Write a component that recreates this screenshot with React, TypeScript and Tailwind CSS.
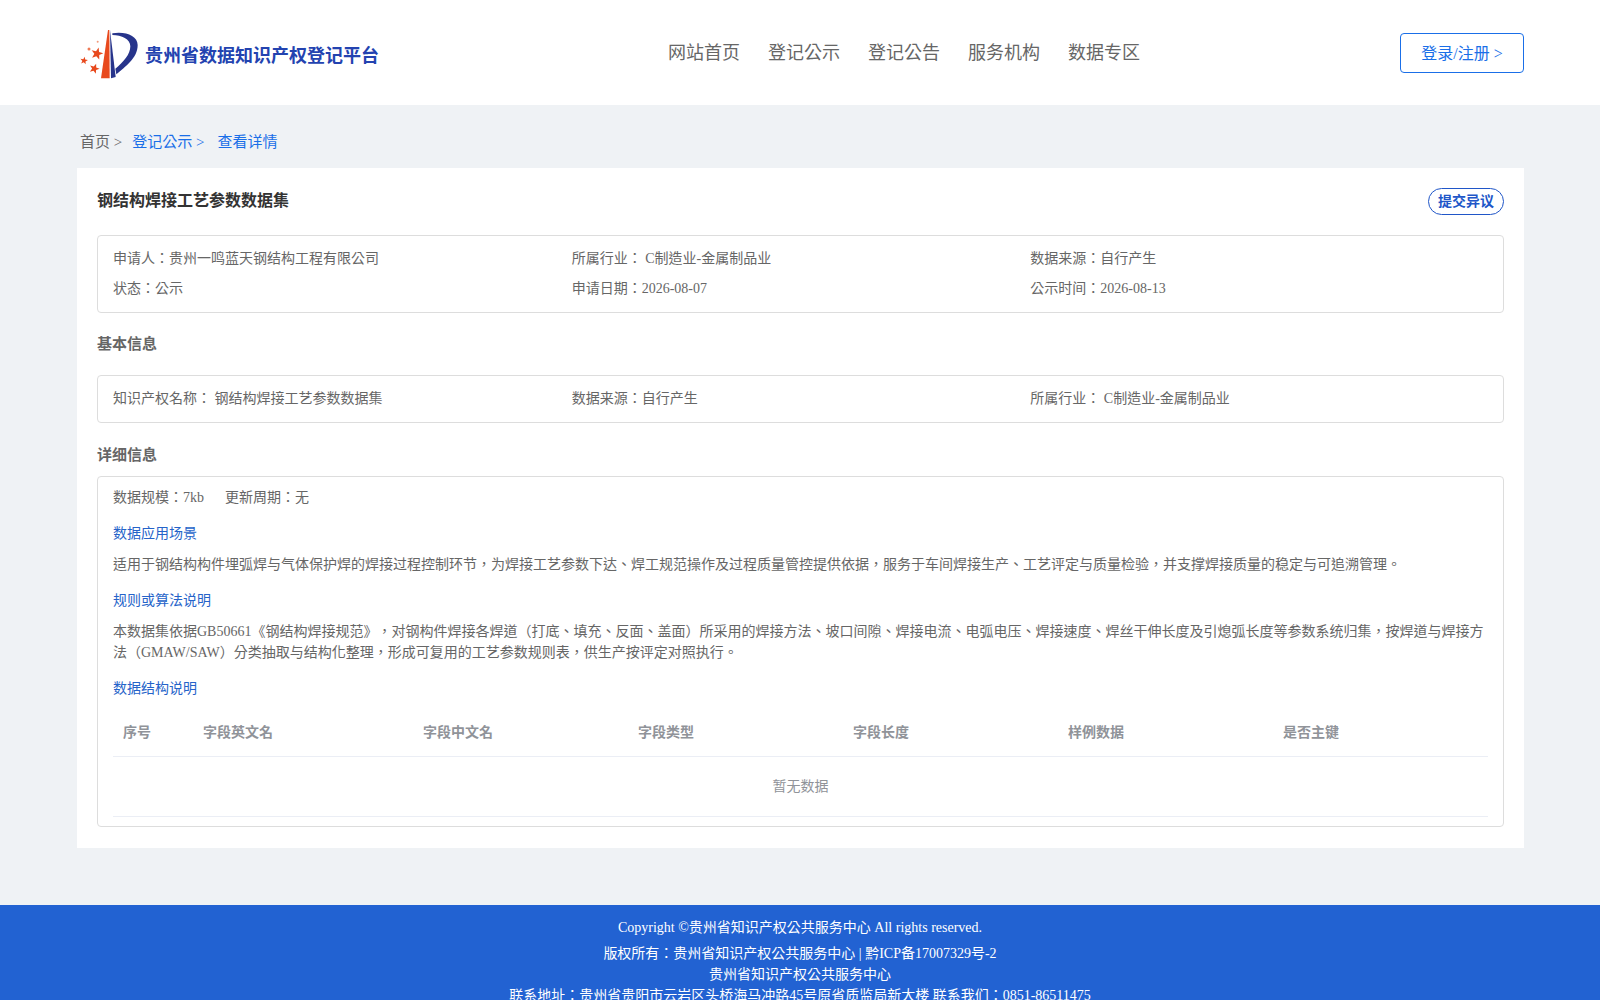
const navItems = ['网站首页', '登记公示', '登记公告', '服务机构', '数据专区']
const columns = ['序号', '字段英文名', '字段中文名', '字段类型', '字段长度', '样例数据', '是否主键']

function starPoints(cx: number, cy: number, r: number, rot = -90) {
  const pts: string[] = []
  for (let i = 0; i < 10; i++) {
    const rad = i % 2 === 0 ? r : r * 0.42
    const a = ((rot + i * 36) * Math.PI) / 180
    pts.push(`${cx + rad * Math.cos(a)},${cy + rad * Math.sin(a)}`)
  }
  return pts.join(' ')
}

function Logo() {
  return (
    <svg viewBox="0 0 210 195" className="h-[65px] w-[70px] shrink-0">
      <path d="M99 27 L78 172 L104 172 L103 27 Z" fill="#e8491d" />
      <path d="M105 27 L108 172 L122 168 Z" fill="#27348b" />
      <path
        d="M112 37 C150 30 188 44 188 72 C188 112 150 137 124 160 L121 143 C145 124 166 100 166 76 C166 54 140 42 112 42 Z"
        fill="#27348b"
      />
      <polygon points={starPoints(66, 98, 19, -75)} fill="#e8491d" />
      <polygon points={starPoints(58, 143, 16, -70)} fill="#e8491d" />
      <polygon points={starPoints(27, 119, 12, -80)} fill="#e8491d" />
      <circle cx="42" cy="84" r="4.5" fill="#ee7a55" />
      <circle cx="68" cy="62" r="3" fill="#f09a7c" />
    </svg>
  )
}

function InfoRow({ items }: { items: string[] }) {
  return (
    <div className="grid grid-cols-3">
      {items.map((item) => (
        <div key={item}>{item}</div>
      ))}
    </div>
  )
}

function SubTitle({ children }: { children: string }) {
  return <div className="text-[#2563c9] leading-[21px]">{children}</div>
}

export default function App() {
  return (
    <div className="min-h-screen bg-[#eff2f5] font-['Liberation_Serif','Noto_Sans_CJK_TC',serif] text-[14px] text-[#666] [text-spacing-trim:space-all]">
      {/* header */}
      <header className="flex h-[105px] items-center bg-white pl-[75px] pr-[76px]">
        <div className="flex w-[593px] items-center pt-[2px]">
          <Logo />
          <span className="pt-[6px] text-[18px] font-bold text-[#2343b0]">贵州省数据知识产权登记平台</span>
        </div>
        <nav className="flex gap-[28px] pt-[1px] text-[18px] leading-none">
          {navItems.map((item) => (
            <a key={item}>{item}</a>
          ))}
        </nav>
        <button className="ml-auto h-[40px] w-[124px] rounded-[4px] border border-[#1a6fe8] pt-[2px] text-[16px] text-[#1a6fe8]">
          登录/注册 &gt;
        </button>
      </header>

      <main className="pl-[77px] pr-[76px]">
        {/* breadcrumb */}
        <div className="flex h-[63px] items-center pl-[3px] pt-[11px] text-[15px]">
          <span>首页 &gt;</span>
          <span className="ml-[10px] text-[#1a6fe8]">登记公示 &gt;</span>
          <span className="ml-[13px] text-[#1a6fe8]">查看详情</span>
        </div>

        <div className="h-[680px] bg-white px-[20px] pt-[20px]">
          <div className="flex h-[47px] items-start justify-between">
            <h1 className="pt-[1px] text-[16px] font-bold leading-[24px] text-[#333]">钢结构焊接工艺参数数据集</h1>
            <button className="h-[27px] w-[76px] rounded-full border border-[#2056c8] text-[14px] font-bold text-[#2056c8]">
              提交异议
            </button>
          </div>

          <div className="rounded-[4px] border border-[#ddd] pl-[15px] pr-[14px] pt-[8px] pb-[8px] leading-[30px]">
            <InfoRow items={['申请人：贵州一鸣蓝天钢结构工程有限公司', '所属行业： C制造业-金属制品业', '数据来源：自行产生']} />
            <InfoRow items={['状态：公示', '申请日期：2026-08-07', '公示时间：2026-08-13']} />
          </div>

          <h2 className="mt-[19px] mb-[19px] text-[15px] font-bold leading-[24px]">基本信息</h2>

          <div className="rounded-[4px] border border-[#ddd] pl-[15px] pr-[14px] py-[8px] leading-[30px]">
            <InfoRow items={['知识产权名称： 钢结构焊接工艺参数数据集', '数据来源：自行产生', '所属行业： C制造业-金属制品业']} />
          </div>

          <h2 className="mt-[20px] mb-[9px] text-[15px] font-bold leading-[24px]">详细信息</h2>

          <div className="h-[351px] rounded-[4px] border border-[#ddd] px-[15px]">
            <div className="flex gap-[21px] pt-[10px] leading-[21px]">
              <span>数据规模：7kb</span>
              <span>更新周期：无</span>
            </div>
            <div className="mt-[15px]">
              <SubTitle>数据应用场景</SubTitle>
            </div>
            <p className="mt-[10px] leading-[21px]">
              适用于钢结构构件埋弧焊与气体保护焊的焊接过程控制环节，为焊接工艺参数下达、焊工规范操作及过程质量管控提供依据，服务于车间焊接生产、工艺评定与质量检验，并支撑焊接质量的稳定与可追溯管理。
            </p>
            <div className="mt-[15px]">
              <SubTitle>规则或算法说明</SubTitle>
            </div>
            <p className="mt-[10px] leading-[21px]">
              本数据集依据GB50661《钢结构焊接规范》，对钢构件焊接各焊道（打底、填充、反面、盖面）所采用的焊接方法、坡口间隙、焊接电流、电弧电压、焊接速度、焊丝干伸长度及引熄弧长度等参数系统归集，按焊道与焊接方法（GMAW/SAW）分类抽取与结构化整理，形成可复用的工艺参数规则表，供生产按评定对照执行。
            </p>
            <div className="mt-[15px]">
              <SubTitle>数据结构说明</SubTitle>
            </div>

            <div className="mt-[10px]">
              <div className="grid h-[48px] grid-cols-[80px_220px_repeat(5,1fr)] items-center border-b border-[#ebeef5] font-bold text-[#909399]">
                {columns.map((col) => (
                  <div key={col} className="px-[10px]">{col}</div>
                ))}
              </div>
              <div className="flex h-[60px] items-center justify-center border-b border-[#ebeef5] text-[#909399]">
                暂无数据
              </div>
            </div>
          </div>
        </div>
      </main>

      {/* footer */}
      <footer className="mt-[57px] bg-[#2262d2] pt-[12px] pb-[16px] text-center leading-[21px] text-white">
        <div>Copyright ©贵州省知识产权公共服务中心 All rights reserved.</div>
        <div className="mt-[5px]">版权所有：贵州省知识产权公共服务中心 | 黔ICP备17007329号-2</div>
        <div>贵州省知识产权公共服务中心</div>
        <div>联系地址：贵州省贵阳市云岩区头桥海马冲路45号原省质监局新大楼 联系我们：0851-86511475</div>
      </footer>
    </div>
  )
}
